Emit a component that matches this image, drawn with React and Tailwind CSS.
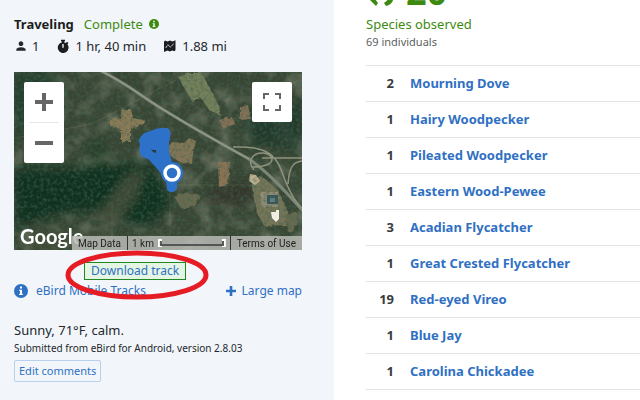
import { MdPerson } from "react-icons/md";

const species = [
  { count: 2, name: "Mourning Dove" },
  { count: 1, name: "Hairy Woodpecker" },
  { count: 1, name: "Pileated Woodpecker" },
  { count: 1, name: "Eastern Wood-Pewee" },
  { count: 3, name: "Acadian Flycatcher" },
  { count: 1, name: "Great Crested Flycatcher" },
  { count: 19, name: "Red-eyed Vireo" },
  { count: 1, name: "Blue Jay" },
  { count: 1, name: "Carolina Chickadee" },
];

function InfoIcon({ className }) {
  return (
    <svg viewBox="0 0 14 14" className={className} aria-hidden="true">
      <circle cx="7" cy="7" r="7" fill="currentColor" />
      <path
        d="M6 2.6h2v2H6zM5.2 5.8H8v4h.9v1.3H5.1V9.8H6V7.1h-.8z"
        fill="#fff"
      />
    </svg>
  );
}

function StopwatchIcon() {
  return (
    <svg viewBox="0 0 12 14" className="h-3.5 w-3" aria-hidden="true">
      <path
        d="M4 .8h4v1.8H7v.7l1.9.7 1.2-1.3 1.3 1.3-1 1.2A5.4 5.4 0 1 1 5 3.3v-.7H4z"
        fill="#1b1d20"
      />
      <path d="M5.3 8.7V5h1.4v3.7z" fill="#f2f6fb" />
    </svg>
  );
}

function DistanceIcon() {
  return (
    <svg viewBox="0 0 12 12" className="size-3" aria-hidden="true">
      <path
        d="M0 1.8 1 .6l2.5.9L6 .6l2.5.9 3-1.2V10l-1 1.3-2.2-.9-2.5 1-2.3-1-3 1.4H0z"
        fill="#1b1d20"
      />
      <path
        d="M1.8 7.8l2-3L6.3 7 10 3.6"
        fill="none"
        stroke="#f2f6fb"
        strokeWidth="1"
        strokeDasharray="2 .8"
      />
    </svg>
  );
}

function BirdIcon() {
  return (
    <svg viewBox="0 0 28 28" className="size-7" aria-hidden="true">
      <path
        d="M3 8c6-8 17-8 22 0l3 9c0 6-3 10-8 11l-2-3c3-2 5-4 6-8H3zM4 22l5-1 3 4-2 3z"
        fill="currentColor"
      />
    </svg>
  );
}

// aerial view with the recorded track on top
function Terrain() {
  return (
    <svg
      viewBox="0 0 288 178"
      preserveAspectRatio="xMidYMid slice"
      className="absolute inset-0 size-full"
      aria-hidden="true"
    >
      <defs>
        <filter id="forest" x="0" y="0" width="100%" height="100%">
          <feTurbulence type="fractalNoise" baseFrequency="0.3" numOctaves="3" seed="8" />
          <feColorMatrix values="0 0 0 0 0.05  0 0 0 0 0.13  0 0 0 0 0.09  2.4 0 0 0 -1" />
        </filter>
        <filter id="fields" x="0" y="0" width="100%" height="100%">
          <feTurbulence type="fractalNoise" baseFrequency="0.05" numOctaves="4" seed="21" />
          <feColorMatrix values="0 0 0 0 0.36  0 0 0 0 0.36  0 0 0 0 0.27  0 3 0 0 -1.4" />
        </filter>
        <filter id="soft" x="-20%" y="-20%" width="140%" height="140%">
          <feGaussianBlur stdDeviation="5" />
        </filter>
        <filter id="edge" x="-10%" y="-10%" width="120%" height="120%">
          <feTurbulence type="fractalNoise" baseFrequency="0.25" numOctaves="2" seed="3" />
          <feDisplacementMap in="SourceGraphic" scale="4" />
        </filter>
      </defs>
      <rect width="288" height="178" fill="#3a4634" />
      <rect width="288" height="178" filter="url(#fields)" opacity="0.45" />
      <g filter="url(#soft)">
        <path d="M0 96h50l52-4 32-2 18 22 4 22-24 22-20-8-28-10-30 2-54 16z" fill="#122e1e" opacity=".95" />
        <path d="M0 0h40l10 22-30 38-20 6z" fill="#1e3b2a" opacity=".7" />
        <path d="M228 40l60-10v46l-50-2z" fill="#1c3428" opacity=".75" />
        <path d="M195 114l40-6 8 24-50 2z" fill="#33342a" opacity=".9" />
        <path d="M75 70l14-4 2 24-12 2z" fill="#183a23" opacity=".7" />
        <path d="M84 142l28-38 20-8-10 30-22 26z" fill="#50543e" opacity=".7" />
        <path d="M20 160h70l20 18H10z" fill="#474e39" opacity=".7" />
      </g>
      <g filter="url(#edge)">
        <path d="M164 5l16-5h7l8 14 9 18 3 12-12-6-8-12-9 3z" fill="#75805a" />
        <path d="M95 48l11-2 2-9h9l2 9 14 3-8 6-8 1v14h-10V57l-10-2z" fill="#8a7a57" />
        <path d="M152 78l6-8 12 1 5-5 7 3-3 12-1 11-12-2-8-5z" fill="#837555" />
        <path d="M204 90h12l-2 23-9 2z" fill="#8c7352" />
        <path d="M205 48l13-3 3 7-12 5zM226 35l8-2 3 14-11 1z" fill="#857055" />
        <path d="M236 103l14 3 14 12 10 22-2 13-22 1-8-15z" fill="#777458" />
        <path d="M247 120h17v15h-17z" fill="#908b72" />
        <path d="M160 125l10-5 16 3-5 11-13 3zM271 143l12-2v12l-8 8z" fill="#6b6b50" />
      </g>
      <path d="M253 123h11v9h-11z" fill="#38555b" />
      <path d="M256 126h5v4h-5z" fill="#668184" />
      <path d="M236 102l6 1 4 6-5 4-6-4z" fill="#bcae8c" />
      <rect width="288" height="178" filter="url(#forest)" opacity="0.6" />
      <path d="M257 140h5v-2h3v9l-3 3-4-4z" fill="#f0eee5" />

      <path d="M0 66l78-14 84-44M156 101v77M158 113h90M98 130v45" fill="none" stroke="#858a6c" strokeWidth=".7" opacity=".35" />
      <path d="M87-1c25 12 43 27 63 39 29 18 56 33 85 49 20 14 35 31 54 52" fill="none" stroke="#7d8777" strokeWidth="3" />
      <path d="M87-1c25 12 43 27 63 39 29 18 56 33 85 49" fill="none" stroke="#9aa092" strokeWidth="1" />
      <path
        d="M219 75c28-1 42 4 49 25 6 17 12 29 20 36M240 98c-7-8-2-17 8-17 9 0 13 7 7 11-6 3-12 3-17 3M248 86h40M274 112c1-15 4-22 14-23"
        fill="none"
        stroke="#8f927c"
        strokeWidth="1.5"
      />

      <path
        d="M127 68q3-6 10-7 8-4 16-3 3 3 0 12v10l3 10 5 11v15q-3 4-6 1l-1-9-8-11-10-11-7-3q-3-5-1-9z"
        fill="#2d72c8"
        stroke="#2d72c8"
        strokeWidth="4"
        strokeLinejoin="round"
      />
      <path d="M137 77l2 1h3v3l-3-1z" fill="#263c38" />
      <circle cx="158" cy="101" r="11" fill="#2d72c8" />
      <circle cx="158" cy="101" r="7" fill="#2d72c8" stroke="#fff" strokeWidth="3.5" />
    </svg>
  );
}

function TrackMap() {
  return (
    <div className="relative mt-4 flex h-[178px] flex-col justify-between overflow-hidden">
      <Terrain />
      <div className="relative flex items-start justify-between p-2.5">
        <div className="flex w-10 flex-col items-center rounded-xs bg-white">
          <button aria-label="Zoom in" className="flex h-10 w-full items-center justify-center">
            <svg viewBox="0 0 18 18" className="size-[18px]">
              <path d="M7 0h4v7h7v4h-7v7H7v-7H0V7h7z" fill="#666" />
            </svg>
          </button>
          <div className="h-px w-[30px] bg-[#e6e6e6]" />
          <button aria-label="Zoom out" className="flex h-10 w-full items-center justify-center">
            <svg viewBox="0 0 18 18" className="size-[18px]">
              <path d="M0 7h18v4H0z" fill="#666" />
            </svg>
          </button>
        </div>
        <button aria-label="Toggle fullscreen view" className="flex size-10 items-center justify-center rounded-xs bg-white">
          <svg viewBox="0 0 18 18" className="size-[18px]">
            <path
              d="M0 0h6v2H2v4H0zM12 0h6v6h-2V2h-4zM0 12h2v4h4v2H0zM16 12h2v6h-6v-2h4z"
              fill="#666"
            />
          </svg>
        </button>
      </div>
      <div className="relative flex items-end">
        <span className="-mr-3 ml-1.5 w-16 pb-0.5 font-[Lato,sans-serif] text-xl leading-6 font-bold text-white">
          Google
        </span>
        <div className="flex h-3.5 min-w-0 flex-1 items-center justify-end bg-[#b9bbb5]/85 font-[Roboto,sans-serif] text-[10px] whitespace-nowrap text-[#222]">
          <button className="px-1.5">Map Data</button>
          <div className="flex min-w-0 flex-1 items-center gap-1 border-x border-[#333] px-1">
            1 km
            <svg viewBox="0 0 70 8" preserveAspectRatio="none" className="h-2 min-w-0 flex-1">
              <path d="M4 1H1v6h3M66 1h3v6h-3" fill="none" stroke="#fff" strokeWidth="2" />
              <path d="M3 2v4h64V2" fill="none" stroke="#555" strokeWidth="2" />
            </svg>
          </div>
          <a href="#terms" className="px-1.5">
            Terms of Use
          </a>
        </div>
      </div>
    </div>
  );
}

export default function App() {
  return (
    <div className="grid h-screen grid-cols-[minmax(0,334fr)_minmax(0,306fr)] overflow-hidden bg-white font-['Noto_Sans',sans-serif] text-[#24272b]">
      <aside className="bg-[#f2f6fb] pt-3 pr-8 pl-3.5">
        <div className="flex items-center gap-2.5 text-[13px] leading-6">
          <h2 className="font-bold text-[#1b1d20]">Traveling</h2>
          <span className="flex items-center gap-1.5 text-[#3d8a10]">
            Complete
            <InfoIcon className="size-2.5" />
          </span>
        </div>
        <div className="flex items-center gap-[18px] text-[13px] leading-5">
          <span className="flex items-center gap-1">
            <MdPerson className="size-3.5" />1
          </span>
          <span className="flex items-center gap-1.5">
            <StopwatchIcon />1 hr, 40 min
          </span>
          <span className="flex items-center gap-1.5">
            <DistanceIcon />
            1.88 mi
          </span>
        </div>

        <TrackMap />

        <div className="relative mt-3 ml-[70px] w-fit">
          <button className="block h-[18px] border border-[#218721] bg-[#e4f5e4] px-1.5 text-xs leading-4 text-[#2f70c3]">
            Download track
          </button>
          {/* hand-drawn highlight */}
          <svg viewBox="0 0 148 50" className="pointer-events-none absolute -top-3 -left-5 z-10 h-[50px] w-[148px] max-w-none">
            <ellipse cx="73" cy="25" rx="69" ry="22" fill="none" stroke="#e51c23" strokeWidth="5" />
          </svg>
        </div>
        <div className="mt-[3px] flex items-center justify-between text-xs leading-4 text-[#2f70c3]">
          <a href="#tracks" className="flex items-center gap-2">
            <InfoIcon className="size-3.5" />
            eBird Mobile Tracks
          </a>
          <a href="#map" className="flex items-center gap-1.5">
            <svg viewBox="0 0 10 10" className="size-2.5" aria-hidden="true">
              <path d="M3.7 0h2.6v3.7H10v2.6H6.3V10H3.7V6.3H0V3.7h3.7z" fill="currentColor" />
            </svg>
            Large map
          </a>
        </div>

        <p className="mt-[21px] text-[13px] leading-5">Sunny, 71°F, calm.</p>
        <p className="text-[10px] leading-4">Submitted from eBird for Android, version 2.8.03</p>
        <button className="mt-1 h-[22px] rounded-xs border border-[#b8cfee] px-1 text-[11px] leading-5 text-[#2f70c3]">
          Edit comments
        </button>
      </aside>

      <main className="pl-8">
        <div className="-mt-8 flex h-12 items-center gap-3 text-4xl font-bold text-[#3d8a10]">
          <BirdIcon />
          20
        </div>
        <p className="text-[13px] leading-4 text-[#3d8a10]">Species observed</p>
        <p className="text-[11px] leading-5 text-[#5c5f63]">69 individuals</p>
        <ul className="mt-[13px] border-t border-[#e2e4e6]">
          {species.map((bird) => (
            <li
              key={bird.name}
              className="flex h-9 items-center gap-4 border-b border-[#e2e4e6] text-[13px] font-bold"
            >
              <span className="w-7 text-right text-[#3a3d40]">{bird.count}</span>
              <a href="#species" className="text-[#2f70c3]">
                {bird.name}
              </a>
            </li>
          ))}
        </ul>
      </main>
    </div>
  );
}
